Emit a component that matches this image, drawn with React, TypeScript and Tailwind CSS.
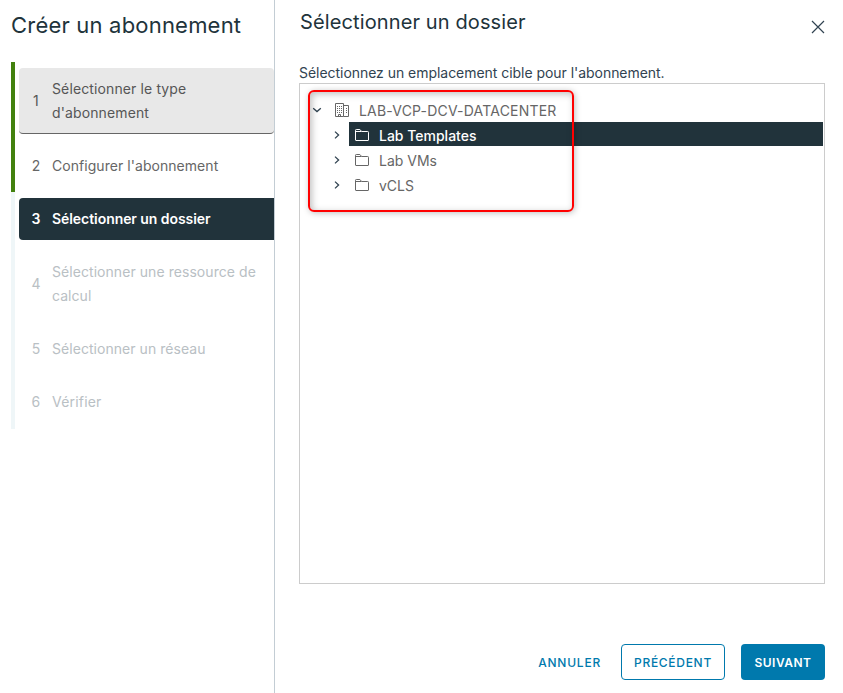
import { clsx } from "clsx";

const steps = [
  { id: 1, label: "Sélectionner le type d'abonnement", state: "hover", tracking: "tracking-[0.12px]" },
  { id: 2, label: "Configurer l'abonnement", state: "done", tracking: "tracking-[0.05px]" },
  { id: 3, label: "Sélectionner un dossier", state: "active", tracking: "tracking-[-0.06px]" },
  { id: 4, label: "Sélectionner une ressource de calcul", state: "disabled", tracking: "tracking-[0.06px]" },
  { id: 5, label: "Sélectionner un réseau", state: "disabled", tracking: "tracking-[0.05px]" },
  { id: 6, label: "Vérifier", state: "disabled", tracking: "tracking-[0.2px]" },
];

const folders = [
  { name: "Lab Templates", selected: true },
  { name: "Lab VMs", selected: false },
  { name: "vCLS", selected: false },
];

const FolderIcon = () => (
  <svg className="mt-0.5" width="16" height="16" viewBox="0 0 16 16" fill="none" stroke="currentColor" strokeWidth="1">
    <path d="M1.5 13V3.3a.8.8 0 0 1 .8-.8h3.6l1.8 2h6a.8.8 0 0 1 .8.8V13a.5.5 0 0 1-.5.5H2a.5.5 0 0 1-.5-.5z" />
    <path d="M1.5 4.5h6" />
  </svg>
);

const DatacenterIcon = () => (
  <svg width="16" height="16" viewBox="0 0 16 16" fill="none" stroke="currentColor" strokeWidth="1">
    <path d="M1.5 14.5v-13h8v13z" />
    <path d="M9.5 3.5h5v11h-5" />
    <path d="M3 4.5h5M3 6.5h5M3 8.5h5M3 10.5h5M12 6.5h1M12 8.5h1M12 10.5h1" strokeDasharray="1 1" />
    <path d="M4.5 14v-1.5h2V14" />
  </svg>
);

const Chevron = ({ open = false }: { open?: boolean }) => (
  <svg width="10" height="10" viewBox="0 0 10 10" fill="none" stroke="#314351" strokeWidth="1.3">
    <path d={open ? "M1.2 3.2L5 6.6l3.8-3.4" : "M3 1.6L6.6 5 3 8.4"} />
  </svg>
);

const StepList = () => (
  <ol className="ml-[11px] flex h-[367px]">
    <li className="flex w-1 flex-col bg-[#eff6f8]">
      <span className="h-[130px] bg-[#42810e]" />
    </li>
    <li className="flex-1 py-1.5 pl-1">
      <ol className="flex flex-col gap-[11px]">
        {steps.map((step) => (
          <li
            key={step.id}
            className={clsx(
              "flex items-center pl-[11px] pr-1 pt-[9px] text-sm leading-6",
              step.tracking,
              step.state === "hover" ? "pb-2" : "pb-[9px]",
              step.state === "hover" && "rounded border-b border-[#666] bg-[#e8e8e8] text-[#565656]",
              step.state === "done" && "text-[#666]",
              step.state === "active" && "rounded-l bg-[#21333b] font-semibold text-white",
              step.state === "disabled" && "text-[#b9c0c4]"
            )}
          >
            <span className="w-3 shrink-0 text-center">{step.id}</span>
            <span className="ml-[10px]">{step.label}</span>
          </li>
        ))}
      </ol>
    </li>
  </ol>
);

const FolderTree = () => (
  <div className="relative h-[501px] border border-[#ccc] pl-2 pr-px pt-[14px]">
    <div className="flex h-[23px] items-center text-sm text-[#666]">
      <span className="flex w-[18px] justify-center">
        <Chevron open />
      </span>
      <span className="ml-2">
        <DatacenterIcon />
      </span>
      <span className="ml-[9px] pt-0.5 tracking-[0.2px]">LAB-VCP-DCV-DATACENTER</span>
    </div>
    {folders.map((folder) => (
      <div key={folder.name} className="mt-px flex h-6 items-center">
        <span className="flex w-[41px] justify-end pr-[7px] pt-px">
          <Chevron />
        </span>
        <div
          className={clsx(
            "flex h-6 flex-1 items-center gap-[9px] pl-[5px] text-sm",
            folder.selected ? "bg-[#21333b] font-medium text-white" : "text-[#666]"
          )}
        >
          <FolderIcon />
          <span className="pt-[3px]">{folder.name}</span>
        </div>
      </div>
    ))}
    {/* Highlight frame over the tree */}
    <div className="pointer-events-none absolute left-2 top-1.5 h-[122px] w-[266px] rounded-md border-2 border-[#ff0000] shadow-[1px_1px_6px_rgba(0,0,0,0.25),inset_2px_2px_7px_rgba(0,0,0,0.25)]" />
  </div>
);

export default function App() {
  return (
    <div className="flex h-[693px] w-[843px] bg-white font-[Inter,sans-serif] text-[#21333b]">
      <aside className="w-[275px] border-r border-[#c3cdd4]">
        <h1 className="mb-[19px] pl-[11px] pt-[7px] text-[22px] leading-9 tracking-[0.2px]">Créer un abonnement</h1>
        <StepList />
      </aside>

      <main className="flex flex-1 flex-col pl-6 pr-[18px]">
        <header className="flex h-[61px] items-start justify-between">
          <h2 className="pl-px pt-2.5 text-xl leading-6 tracking-[0.12px]">Sélectionner un dossier</h2>
          <button aria-label="Fermer" className="mt-5">
            <svg width="14" height="14" viewBox="0 0 14 14" fill="none" stroke="#314351" strokeWidth="1.2">
              <path d="M1 1l12 12M13 1L1 13" />
            </svg>
          </button>
        </header>
        <p className="h-[22px] text-sm leading-6 tracking-[-0.04px] text-[#314351]">
          Sélectionnez un emplacement cible pour l'abonnement.
        </p>
        <FolderTree />
        <footer className="mt-[60px] flex items-center justify-end gap-4 text-xs font-medium">
          <button className="px-1 pt-px tracking-[0.78px] text-[#0079ad]">ANNULER</button>
          <button className="h-9 w-[104px] rounded border border-[#0079ad] pt-px tracking-[0.7px] text-[#0079ad]">
            PRÉCÉDENT
          </button>
          <button className="h-9 w-[84px] rounded bg-[#0079ad] pt-px font-semibold tracking-[0.5px] text-white">
            SUIVANT
          </button>
        </footer>
      </main>
    </div>
  );
}
